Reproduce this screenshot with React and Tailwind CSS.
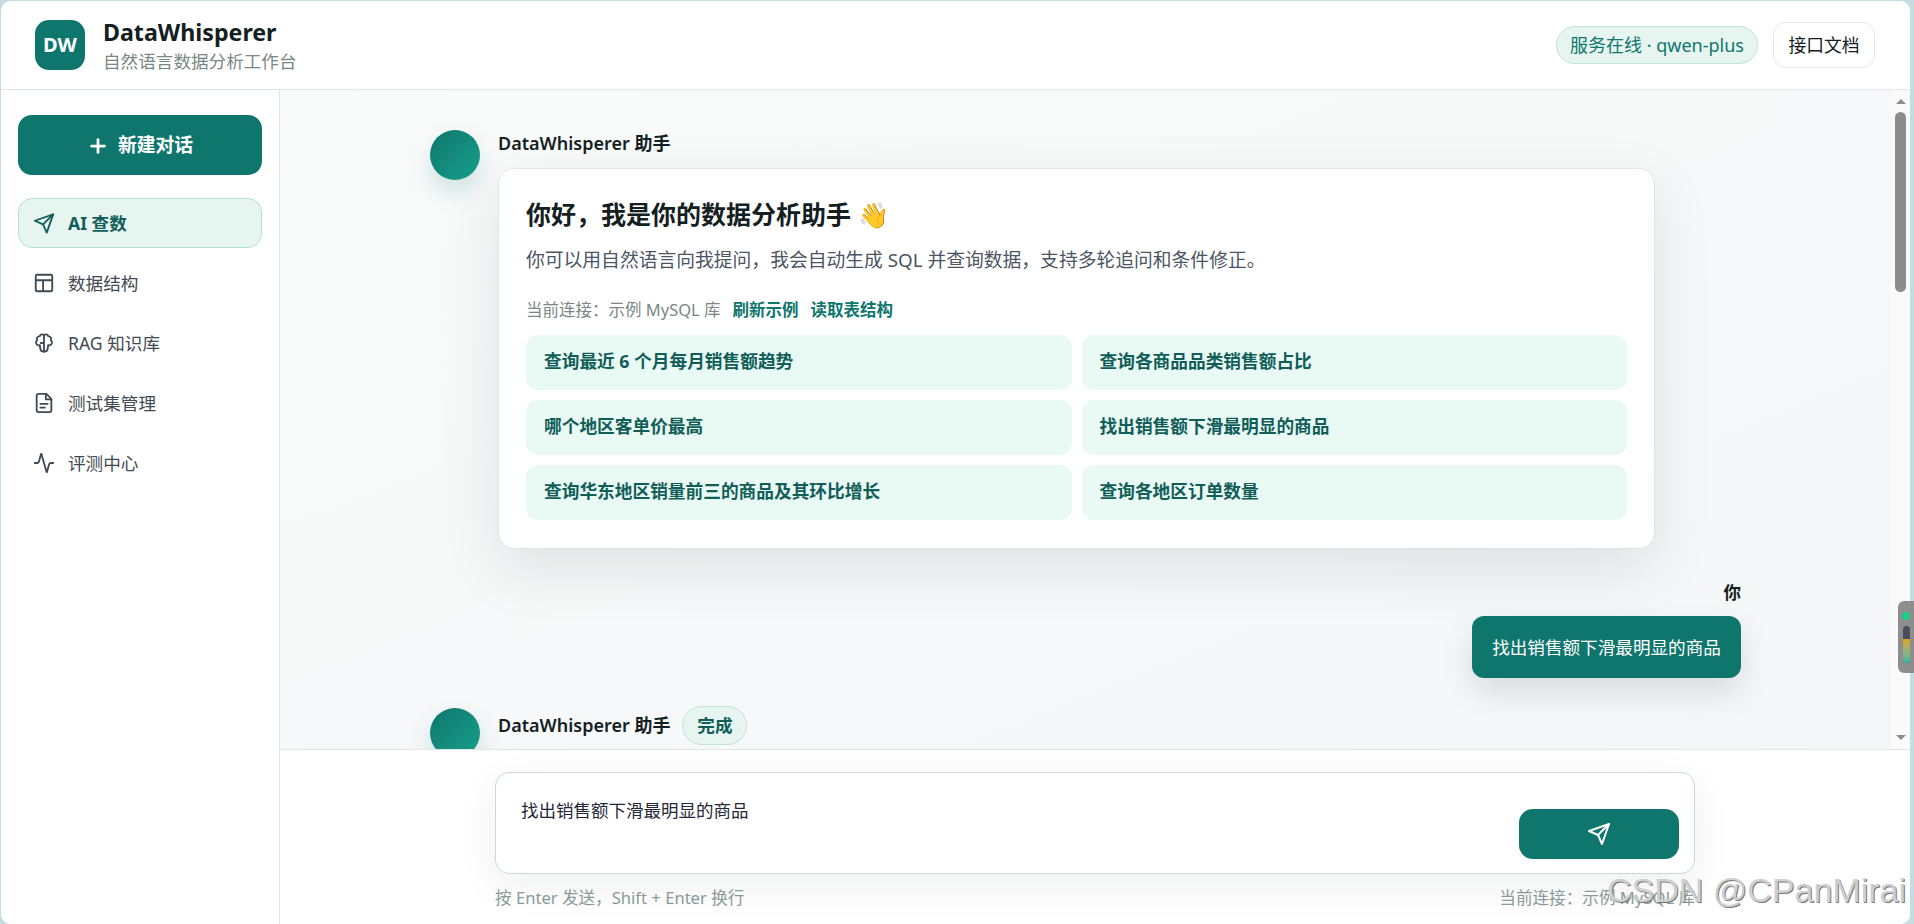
import React from "react";
import { Plus, Activity } from "lucide-react";
import { FiSend } from "react-icons/fi";

const FONT = "font-['Noto_Sans','Noto_Sans_CJK_SC',sans-serif]";

const TableIcon = () => (
  <svg width="22" height="22" viewBox="0 0 24 24" fill="none" stroke="currentColor" strokeWidth="2">
    <rect x="3" y="3" width="18" height="18" rx="1.5" />
    <path d="M3 9h18M11 9v12" />
  </svg>
);

const BrainIcon = () => (
  <svg width="22" height="22" viewBox="0 0 24 24" fill="none" stroke="currentColor" strokeWidth="2" strokeLinecap="round" strokeLinejoin="round">
    <path d="M12 3.5C10.5 2 8 2.5 7.5 4.5 5 4.5 3.5 7 4.5 9 2.5 10.5 3 14 6 14.5c.5 0 1 0 1.5-.2l.5 4.2c.2 2 2 3 4 3s3.8-1 4-3l.5-4.2c.5.2 1 .2 1.5.2 3-.5 3.5-4 1.5-5.5 1-2-.5-4.5-3-4.5C16 2.500 13.500 2 12 3.500z" />
    <path d="M12 3.500V21M8.500 12H12" />
  </svg>
);

const DocIcon = () => (
  <svg width="22" height="22" viewBox="0 0 24 24" fill="none" stroke="currentColor" strokeWidth="2" strokeLinecap="round" strokeLinejoin="round">
    <path d="M14.500 2H6a2 2 0 0 0-2 2v16a2 2 0 0 0 2 2h12a2 2 0 0 0 2-2V7.500L14.500 2z" />
    <path d="M14 2v6h6M8 13h8M8 17h5" />
  </svg>
);

const navItems = [
  { label: "AI 查数", icon: <FiSend size={25} strokeWidth={2} />, active: true },
  { label: "数据结构", icon: <TableIcon /> },
  { label: "RAG 知识库", icon: <BrainIcon /> },
  { label: "测试集管理", icon: <DocIcon /> },
  { label: "评测中心", icon: <Activity size={22} strokeWidth={2} /> },
];

const suggestions = [
  "查询最近 6 个月每月销售额趋势",
  "查询各商品品类销售额占比",
  "哪个地区客单价最高",
  "找出销售额下滑最明显的商品",
  "查询华东地区销量前三的商品及其环比增长",
  "查询各地区订单数量",
];

const Avatar = () => (
  <div className="w-[50px] h-[50px] shrink-0 rounded-full bg-gradient-to-br from-[#0f766e] to-[#17a08c] shadow-[0_12px_24px_rgba(15,118,110,0.18)]" />
);

const Header = () => (
  <header className="h-[89px] shrink-0 flex items-center justify-between pl-[34px] pr-[35px] bg-white border-b border-[#dfe6e6]">
    <div className="flex items-center gap-[18px]">
      <div className="w-[50px] h-[50px] rounded-[14px] bg-[#0f766e] flex items-center justify-center text-white text-[20px] font-bold">DW</div>
      <div>
        <div className="text-[23.2px] leading-[32px] font-bold text-[#14201f]">DataWhisperer</div>
        <div className="text-[17.6px] leading-[26px] text-[#7a8785]">自然语言数据分析工作台</div>
      </div>
    </div>
    <div className="flex items-center gap-[15px]">
      <div className="h-[38px] w-[202px] flex items-center justify-center rounded-full bg-[#e6f5f0] border border-[#bfe3d8] text-[#0f766e] text-[18px]">服务在线 · qwen-plus</div>
      <button className="h-[46px] w-[102px] rounded-[12px] bg-white border border-[#e1e8e7] text-[#14201f] text-[17.8px]">接口文档</button>
    </div>
  </header>
);

const Sidebar = () => (
  <aside className="w-[279px] shrink-0 bg-white border-r border-[#dfe6e6] pt-[25px] px-[17px]">
    <button className="w-full h-[60px] rounded-[14px] bg-[#0f766e] text-white flex items-center justify-center gap-[9px] text-[18.800px] font-bold pt-[1px]">
      <Plus size={22} strokeWidth={3} />
      新建对话
    </button>
    <nav className="mt-[23px] flex flex-col gap-[10px]">
      {navItems.map((item) => (
        <div
          key={item.label}
          className={`h-[50px] flex items-center gap-[13px] px-[14px] rounded-[14px] border text-[17.600px] ${
            item.active ? "bg-[#e6f5f0] border-[#b5e0d3] text-[#115e59] font-bold" : "border-transparent text-[#3f4a52]"
          }`}
        >
          <span className="w-[22px] flex justify-center">{item.icon}</span>
          {item.label}
        </div>
      ))}
    </nav>
  </aside>
);

const Messages = () => (
  <div className="flex-1 min-h-0 flex bg-gradient-to-br from-[#f9fbfa] to-[#f4f6f8]">
    <div className="flex-1 overflow-hidden pt-[40px] px-[150px]">
      <div className="flex gap-[18px]">
        <Avatar />
        <div className="flex-1">
          <div className="h-[26px] leading-[26px] text-[18px] font-semibold text-[#14201f]">DataWhisperer 助手</div>
          <div className="mt-[12px] w-[1157px] h-[381px] bg-white rounded-[16px] border border-[#dce8e6] shadow-[0_20px_60px_rgba(15,30,30,0.1)] px-[27px] pt-[27px]">
            <h2 className="text-[25px] leading-[36px] font-bold text-[#14201f]">你好，我是你的数据分析助手 👋</h2>
            <p className="mt-[14px] text-[18.800px] leading-[28px] text-[#4b5563]">你可以用自然语言向我提问，我会自动生成 SQL 并查询数据，支持多轮追问和条件修正。</p>
            <div className="mt-[24px] flex items-center gap-[12px] text-[16.500px] leading-[24px]">
              <span className="text-[#7a8785]">当前连接：示例 MySQL 库</span>
              <span className="font-bold text-[#0f766e]">刷新示例</span>
              <span className="font-bold text-[#0f766e]">读取表结构</span>
            </div>
            <div className="mt-[13px] grid grid-cols-2 gap-[10px]">
              {suggestions.map((text) => (
                <div key={text} className="h-[55px] flex items-center px-[18px] pb-[2px] rounded-[12px] bg-[#e9f9f4] text-[#115e59] text-[17.700px] font-bold">
                  {text}
                </div>
              ))}
            </div>
          </div>
        </div>
      </div>
      <div className="mt-[29px] flex flex-col items-end">
        <div className="h-[28px] leading-[28px] text-[17.500px] font-bold text-[#14201f]">你</div>
        <div className="mt-[10px] h-[62px] w-[269px] flex items-center justify-center rounded-[12px] bg-[#0f766e] text-white text-[17.600px] shadow-[0_14px_32px_rgba(15,30,30,0.12)]">找出销售额下滑最明显的商品</div>
      </div>
      <div className="mt-[30px] flex gap-[18px]">
        <Avatar />
        <div className="flex items-center gap-[12px] h-[39px] -mt-[2px]">
          <span className="text-[18px] font-semibold text-[#14201f]">DataWhisperer 助手</span>
          <span className="h-[39px] w-[65px] flex items-center justify-center rounded-full bg-[#e6f5f0] border border-[#bfe3d8] text-[#115e59] text-[17.600px] font-bold">完成</span>
        </div>
      </div>
    </div>
    <div className="w-[19px] shrink-0 bg-[#fafafa] flex flex-col items-center">
      <div className="mt-[9px] w-0 h-0 border-x-[5px] border-x-transparent border-b-[5px] border-b-[#8c8c8c]" />
      <div className="mt-[8px] w-[11px] h-[180px] rounded-full bg-[#8c8c8c]" />
      <div className="mt-auto mb-[9px] w-0 h-0 border-x-[5px] border-x-transparent border-t-[5px] border-t-[#8c8c8c]" />
    </div>
  </div>
);

const Composer = () => (
  <div className="h-[175px] shrink-0 bg-white border-t border-[#dfe6e6] pt-[22px]">
    <div className="w-[1200px] mx-auto">
      <div className="h-[102px] rounded-[14px] border border-[#c9d9d6] bg-white shadow-[0_12px_40px_rgba(15,30,30,0.07)] flex justify-between pl-[25px] pr-[15px] pt-[36px]">
        <div className="-mt-[11px] text-[17.500px] leading-[24px] text-[#1f2937]">找出销售额下滑最明显的商品</div>
        <button className="w-[160px] h-[50px] rounded-[14px] bg-[#0f766e] text-white flex items-center justify-center">
          <FiSend size={24} strokeWidth={2} />
        </button>
      </div>
      <div className="mt-[12px] flex justify-between text-[16.600px] leading-[24px] text-[#8a9a98]">
        <span>按 Enter 发送，Shift + Enter 换行</span>
        <span>当前连接：示例 MySQL 库</span>
      </div>
    </div>
  </div>
);

export default function App() {
  return (
    <div className={`relative w-[1914px] h-[924px] overflow-hidden bg-[#c5dce3] pl-[1px] pt-[1px] pr-[4px] ${FONT}`}>
      <div className="h-full flex flex-col bg-white rounded-[10px] overflow-hidden">
        <Header />
        <div className="flex-1 min-h-0 flex">
          <Sidebar />
          <main className="flex-1 min-w-0 flex flex-col">
            <Messages />
            <Composer />
          </main>
        </div>
      </div>
      <div className="absolute right-0 top-[601px] w-[16px] h-[72px] rounded-l-[6px] bg-[#8e8e8e] flex flex-col items-center pt-[11px]">
        <div className="w-[8px] h-[8px] rounded-full bg-[#1ccf85]" />
        <div className="mt-[6px] w-[7px] h-[37px] rounded-full overflow-hidden bg-[#4b4f5c] pt-[13px]">
          <div className="h-full bg-gradient-to-b from-[#dca516] to-[#22b5a5]" />
        </div>
      </div>
      <div className="absolute left-[1607px] top-[870px] text-[34px] leading-[40px] font-['Liberation_Sans',sans-serif] text-[#cfcfcf] [text-shadow:1px_1px_0_#777777] whitespace-nowrap">CSDN @CPanMirai</div>
    </div>
  );
}
